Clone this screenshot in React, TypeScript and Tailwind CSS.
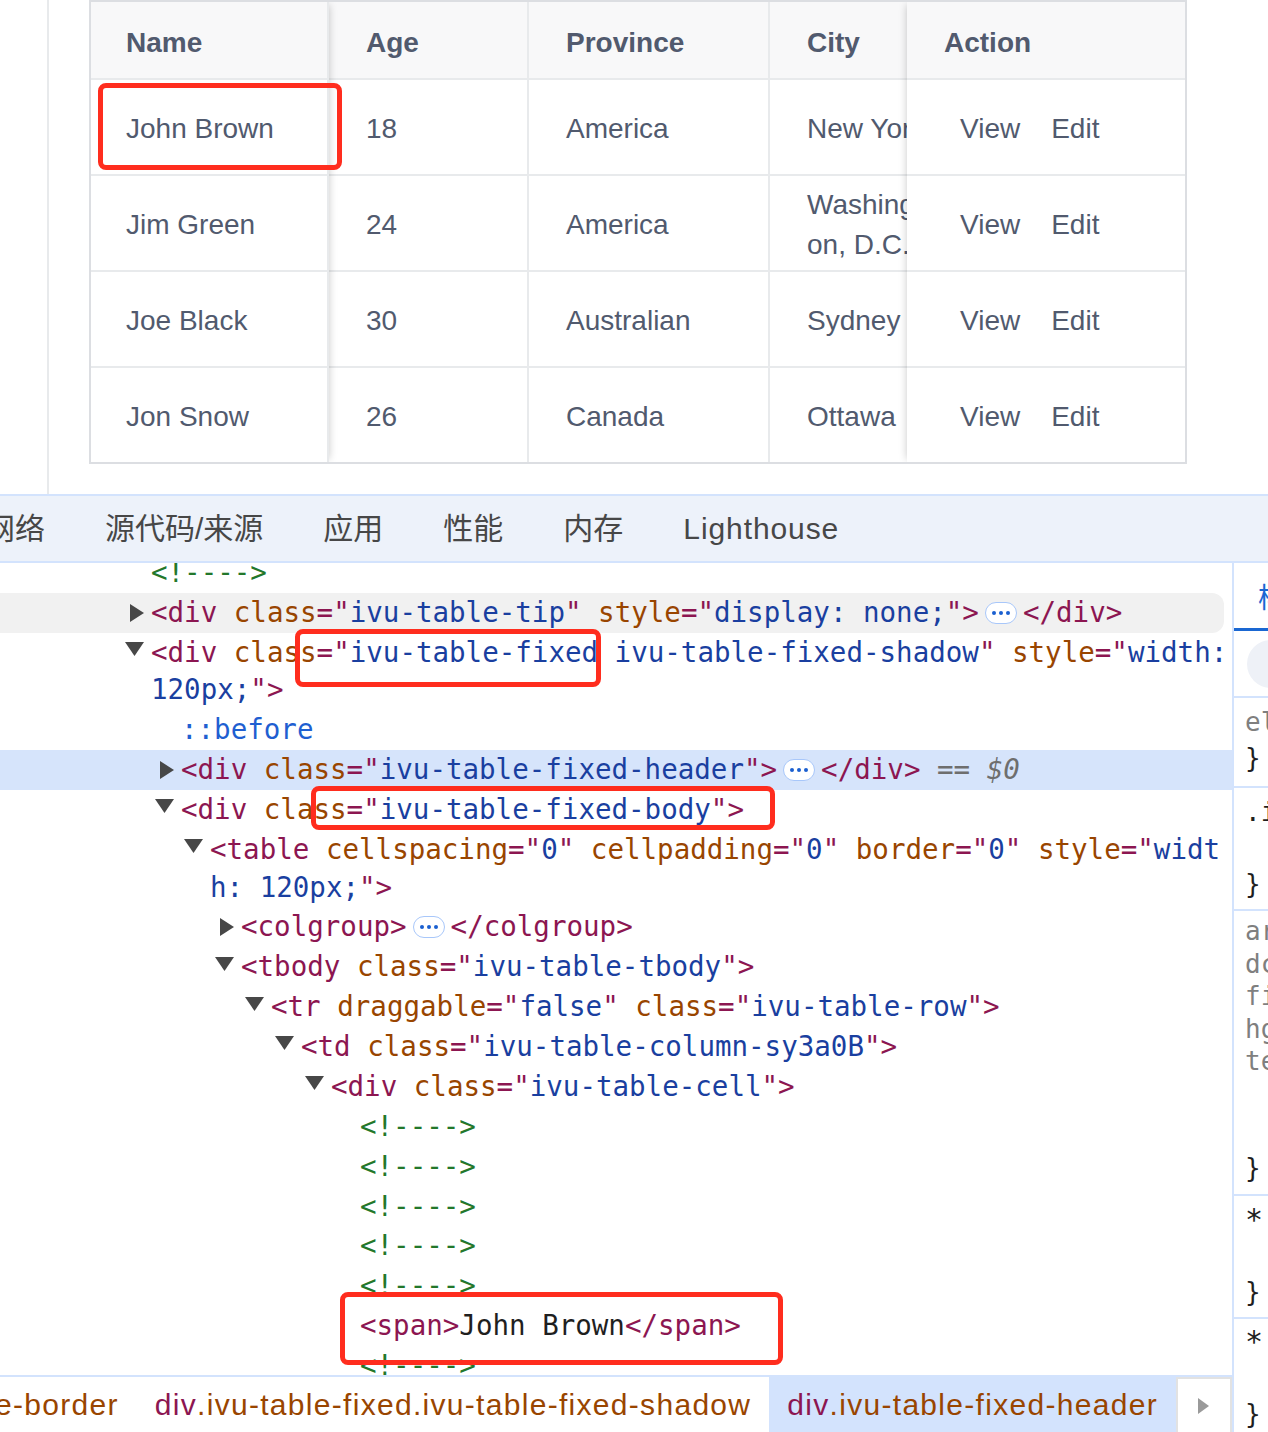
import React from "react";

type Part = [string, string] | "PILL" | "BR";

const COLORS: Record<string, string> = {
  T: "text-[#8c1651]",
  A: "text-[#994500]",
  V: "text-[#1a3fa0]",
  C: "text-[#23772b]",
  P: "text-[#1f5fd1]",
  X: "text-[#1f1f1f]",
  G: "text-[#6e6e6e]",
  I: "text-[#6e6e6e] italic",
};

type Line = {
  slot: string;
  tri?: "r" | "d";
  bg?: "hover" | "sel";
  parts: Part[];
};

const attr = (name: string, value: string, trailing = '" '): Part[] => [
  ["A", name],
  ["T", '="'],
  ["V", value],
  ["T", trailing],
];

const LINES: Line[] = [
  { slot: "w-[151px]", parts: [["C", "<!---->"]] },
  {
    slot: "w-[151px]",
    tri: "r",
    bg: "hover",
    parts: [
      ["T", "<div "],
      ...attr("class", "ivu-table-tip"),
      ...attr("style", "display: none;", '">'),
      "PILL",
      ["T", "</div>"],
    ],
  },
  {
    slot: "w-[151px]",
    tri: "d",
    parts: [
      ["T", "<div "],
      ...attr("class", "ivu-table-fixed ivu-table-fixed-shadow"),
      ["A", "style"],
      ["T", '="'],
      ["V", "width:"],
      "BR",
      ["V", "120px;"],
      ["T", '">'],
    ],
  },
  { slot: "w-[181px]", parts: [["P", "::before"]] },
  {
    slot: "w-[181px]",
    tri: "r",
    bg: "sel",
    parts: [
      ["T", "<div "],
      ...attr("class", "ivu-table-fixed-header", '">'),
      "PILL",
      ["T", "</div>"],
      ["G", " == "],
      ["I", "$0"],
    ],
  },
  {
    slot: "w-[181px]",
    tri: "d",
    parts: [["T", "<div "], ...attr("class", "ivu-table-fixed-body", '">')],
  },
  {
    slot: "w-[210px]",
    tri: "d",
    parts: [
      ["T", "<table "],
      ...attr("cellspacing", "0"),
      ...attr("cellpadding", "0"),
      ...attr("border", "0"),
      ["A", "style"],
      ["T", '="'],
      ["V", "widt"],
      "BR",
      ["V", "h: 120px;"],
      ["T", '">'],
    ],
  },
  {
    slot: "w-[241px]",
    tri: "r",
    parts: [["T", "<colgroup>"], "PILL", ["T", "</colgroup>"]],
  },
  {
    slot: "w-[241px]",
    tri: "d",
    parts: [["T", "<tbody "], ...attr("class", "ivu-table-tbody", '">')],
  },
  {
    slot: "w-[271px]",
    tri: "d",
    parts: [
      ["T", "<tr "],
      ...attr("draggable", "false"),
      ...attr("class", "ivu-table-row", '">'),
    ],
  },
  {
    slot: "w-[301px]",
    tri: "d",
    parts: [["T", "<td "], ...attr("class", "ivu-table-column-sy3a0B", '">')],
  },
  {
    slot: "w-[331px]",
    tri: "d",
    parts: [["T", "<div "], ...attr("class", "ivu-table-cell", '">')],
  },
  { slot: "w-[360px]", parts: [["C", "<!---->"]] },
  { slot: "w-[360px]", parts: [["C", "<!---->"]] },
  { slot: "w-[360px]", parts: [["C", "<!---->"]] },
  { slot: "w-[360px]", parts: [["C", "<!---->"]] },
  { slot: "w-[360px]", parts: [["C", "<!---->"]] },
  {
    slot: "w-[360px]",
    parts: [
      ["T", "<span>"],
      ["X", "John Brown"],
      ["T", "</span>"],
    ],
  },
  { slot: "w-[360px]", parts: [["C", "<!---->"]] },
];

function Pill() {
  return (
    <span className="mx-[6px] inline-flex h-[22px] w-[32px] items-center justify-center gap-[3px] rounded-full border-[1.5px] border-[#a8c7fa] bg-white">
      <span className="h-[4px] w-[4px] rounded-full bg-[#1a5fd0]" />
      <span className="h-[4px] w-[4px] rounded-full bg-[#1a5fd0]" />
      <span className="h-[4px] w-[4px] rounded-full bg-[#1a5fd0]" />
    </span>
  );
}

function Tri({ dir }: { dir: "r" | "d" }) {
  if (dir === "r")
    return (
      <svg width="14" height="18" viewBox="0 0 14 18">
        <path d="M0 0 L14 9 L0 18 Z" fill="#474747" />
      </svg>
    );
  return (
    <svg width="19" height="14" viewBox="0 0 19 14" className="mt-[-7px]">
      <path d="M0 0 H19 L9.5 14 Z" fill="#474747" />
    </svg>
  );
}

function TreeLine({ line }: { line: Line }) {
  const sub: Part[][] = [[]];
  line.parts.forEach((p) => {
    if (p === "BR") sub.push([]);
    else sub[sub.length - 1].push(p);
  });
  const bg =
    line.bg === "hover"
      ? "bg-[#f1f1f1] mr-[8px] rounded-r-[12px]"
      : line.bg === "sel"
      ? "bg-[#d6e4fb]"
      : "";
  return (
    <div className={`flex items-start py-[1.15px] ${bg}`}>
      <div
        className={`${line.slot} shrink-0 h-[37.6px] flex items-center justify-end pr-[7px]`}
      >
        {line.tri ? <Tri dir={line.tri} /> : null}
      </div>
      <div className="flex flex-col">
        {sub.map((parts, i) => (
          <div key={i} className="flex h-[37.6px] items-center whitespace-pre">
            {parts.map((p, j) =>
              p === "PILL" ? (
                <Pill key={j} />
              ) : (
                <span key={j} className={COLORS[(p as [string, string])[0]]}>
                  {(p as [string, string])[1]}
                </span>
              )
            )}
          </div>
        ))}
      </div>
    </div>
  );
}

function Tree() {
  return (
    <div className="h-[812px] overflow-hidden font-['DejaVu_Sans_Mono',monospace] text-[27.5px] leading-[37.6px]">
      <div className="mt-[-10px]">
        {LINES.map((l, i) => (
          <TreeLine key={i} line={l} />
        ))}
      </div>
    </div>
  );
}

const ROWS = [
  { name: "John Brown", age: "18", prov: "America", city: ["New York"] },
  { name: "Jim Green", age: "24", prov: "America", city: ["Washingt", "on, D.C."] },
  { name: "Joe Black", age: "30", prov: "Australian", city: ["Sydney"] },
  { name: "Jon Snow", age: "26", prov: "Canada", city: ["Ottawa"] },
];

function Column({
  className,
  pad,
  header,
  cells,
}: {
  className: string;
  pad: string;
  header: string;
  cells: React.ReactNode[];
}) {
  return (
    <div className={`flex flex-col ${className}`}>
      <div
        className={`h-[78px] border-b-2 border-[#e8eaec] bg-[#f8f8f9] flex items-center pt-[6px] font-bold whitespace-nowrap ${pad}`}
      >
        {header}
      </div>
      {cells.map((c, i) => (
        <div
          key={i}
          className={`${
            i === cells.length - 1 ? "h-[94px]" : "h-[96px] border-b-2 border-[#e8eaec]"
          } flex items-center pt-[3px] whitespace-nowrap ${pad}`}
        >
          {c}
        </div>
      ))}
    </div>
  );
}

function Table() {
  return (
    <div className="w-[1098px] border-2 border-[#dcdee2] flex overflow-hidden text-[28px] leading-[40px] text-[#515a6e] font-['Liberation_Sans',Arial,sans-serif]">
      <Column
        className="w-[238px] shrink-0 border-r-2 border-[#e8eaec] relative z-10 bg-white shadow-[3px_0_8px_-3px_rgba(0,0,0,0.22)]"
        pad="pl-[35px]"
        header="Name"
        cells={ROWS.map((r) => r.name)}
      />
      <Column
        className="w-[200px] shrink-0 border-r-2 border-[#e8eaec]"
        pad="pl-[37px]"
        header="Age"
        cells={ROWS.map((r) => r.age)}
      />
      <Column
        className="w-[241px] shrink-0 border-r-2 border-[#e8eaec]"
        pad="pl-[37px]"
        header="Province"
        cells={ROWS.map((r) => r.prov)}
      />
      <Column
        className="w-[137px] shrink-0 overflow-hidden"
        pad="pl-[37px]"
        header="City"
        cells={ROWS.map((r) => (
          <div className="flex flex-col">
            {r.city.map((t, i) => (
              <span key={i}>{t}</span>
            ))}
          </div>
        ))}
      />
      <Column
        className="flex-1 relative z-10 bg-white shadow-[-3px_0_8px_-3px_rgba(0,0,0,0.22)]"
        pad="pl-[37px]"
        header="Action"
        cells={ROWS.map(() => (
          <div className="flex">
            <span className="ml-[16px]">View</span>
            <span className="ml-[31px]">Edit</span>
          </div>
        ))}
      />
    </div>
  );
}

function TabBar() {
  const tabs = ["网络", "源代码/来源", "应用", "性能", "内存"];
  return (
    <div className="h-[69px] border-y-2 border-[#d3e3fd] bg-[#edf2fa] flex items-center gap-[60px] ml-[-15px] text-[30px] text-[#474747] font-['Liberation_Sans','Noto_Sans_CJK_SC',sans-serif] whitespace-nowrap">
      {tabs.map((t) => (
        <span key={t}>{t}</span>
      ))}
      <span className="tracking-[0.9px]">Lighthouse</span>
    </div>
  );
}

function Crumbs() {
  return (
    <div className="h-[57px] border-t-2 border-[#d3e3fd] flex items-stretch text-[30px] tracking-[1.3px] font-['Liberation_Sans',Arial,sans-serif] whitespace-nowrap">
      <div className="ml-[-23px] px-[18px] flex items-center text-[#994500]">e-border</div>
      <div className="px-[18px] flex items-center">
        <span className="text-[#8c1651]">div</span>
        <span className="text-[#994500]">.ivu-table-fixed.ivu-table-fixed-shadow</span>
      </div>
      <div className="px-[18px] flex items-center bg-[#d3e3fd]">
        <span className="text-[#8c1651]">div</span>
        <span className="text-[#994500]">.ivu-table-fixed-header</span>
      </div>
      <div className="ml-auto w-[58px] border-2 border-b-0 border-[#e2e2e2] flex items-center justify-center">
        <svg width="11" height="16" viewBox="0 0 11 16">
          <path d="M0 0 L11 8 L0 16 Z" fill="#9a9a9a" />
        </svg>
      </div>
    </div>
  );
}

function RightPane() {
  return (
    <div className="w-[36px] shrink-0 border-l-2 border-[#d3e3fd] overflow-hidden whitespace-nowrap font-['DejaVu_Sans_Mono',monospace] text-[26px] text-[#1f1f1f]">
      <div className="h-[68px] border-b-[3px] border-[#1a67d2] flex items-center pl-[24px] text-[28px] text-[#1a67d2] font-['Noto_Sans_CJK_SC',sans-serif]">
        样式
      </div>
      <div className="h-[67px] border-b-2 border-[#d3e3fd] pl-[13px] pt-[9px]">
        <div className="h-[48px] w-[60px] rounded-full bg-[#eef1f7]" />
      </div>
      <div className="h-[90px] border-b-2 border-[#d3e3fd] pl-[11px] pt-[6px] leading-[36px]">
        <div className="text-[#7f7f7f]">el</div>
        <div>{"}"}</div>
      </div>
      <div className="h-[123px] border-b-2 border-[#d3e3fd] pl-[11px] pt-[6px] leading-[36px]">
        <div>.i</div>
        <div>&nbsp;</div>
        <div>{"}"}</div>
      </div>
      <div className="h-[285px] border-b-2 border-[#d3e3fd] pl-[11px] pt-[4px] leading-[32.5px] text-[#7f7f7f]">
        <div>ar</div>
        <div>dc</div>
        <div>fi</div>
        <div>hg</div>
        <div>te</div>
        <div className="mt-[74px] text-[#1f1f1f]">{"}"}</div>
      </div>
      <div className="h-[123px] border-b-2 border-[#d3e3fd] pl-[11px] pt-[6px] leading-[36px]">
        <div className="text-[30px]">
          *<span className="text-[#7f7f7f]">,</span>
        </div>
        <div>&nbsp;</div>
        <div>{"}"}</div>
      </div>
      <div className="pl-[11px] pt-[5px] leading-[36px]">
        <div className="text-[30px]">*</div>
        <div>&nbsp;</div>
        <div>{"}"}</div>
      </div>
    </div>
  );
}

export default function App() {
  return (
    <div className="relative w-[1268px] h-[1432px] overflow-hidden bg-white">
      <div className="flex h-[494px]">
        <div className="w-[47px] shrink-0" />
        <div className="flex-1 border-l-2 border-[#e8eaec] pl-[40px]">
          <Table />
        </div>
      </div>
      <TabBar />
      <div className="flex h-[869px]">
        <div className="w-[1232px] shrink-0 flex flex-col">
          <Tree />
          <Crumbs />
        </div>
        <RightPane />
      </div>

      <div className="absolute left-[98px] top-[83px] w-[244px] h-[87px] border-[5px] border-[#ff2d1e] rounded-[8px] z-20" />
      <div className="absolute left-[295px] top-[629px] w-[306px] h-[58px] border-[5px] border-[#ff2d1e] rounded-[8px] z-20" />
      <div className="absolute left-[311px] top-[786px] w-[464px] h-[44px] border-[5px] border-[#ff2d1e] rounded-[8px] z-20" />
      <div className="absolute left-[340px] top-[1292px] w-[443px] h-[73px] border-[5px] border-[#ff2d1e] rounded-[8px] z-20" />
    </div>
  );
}
